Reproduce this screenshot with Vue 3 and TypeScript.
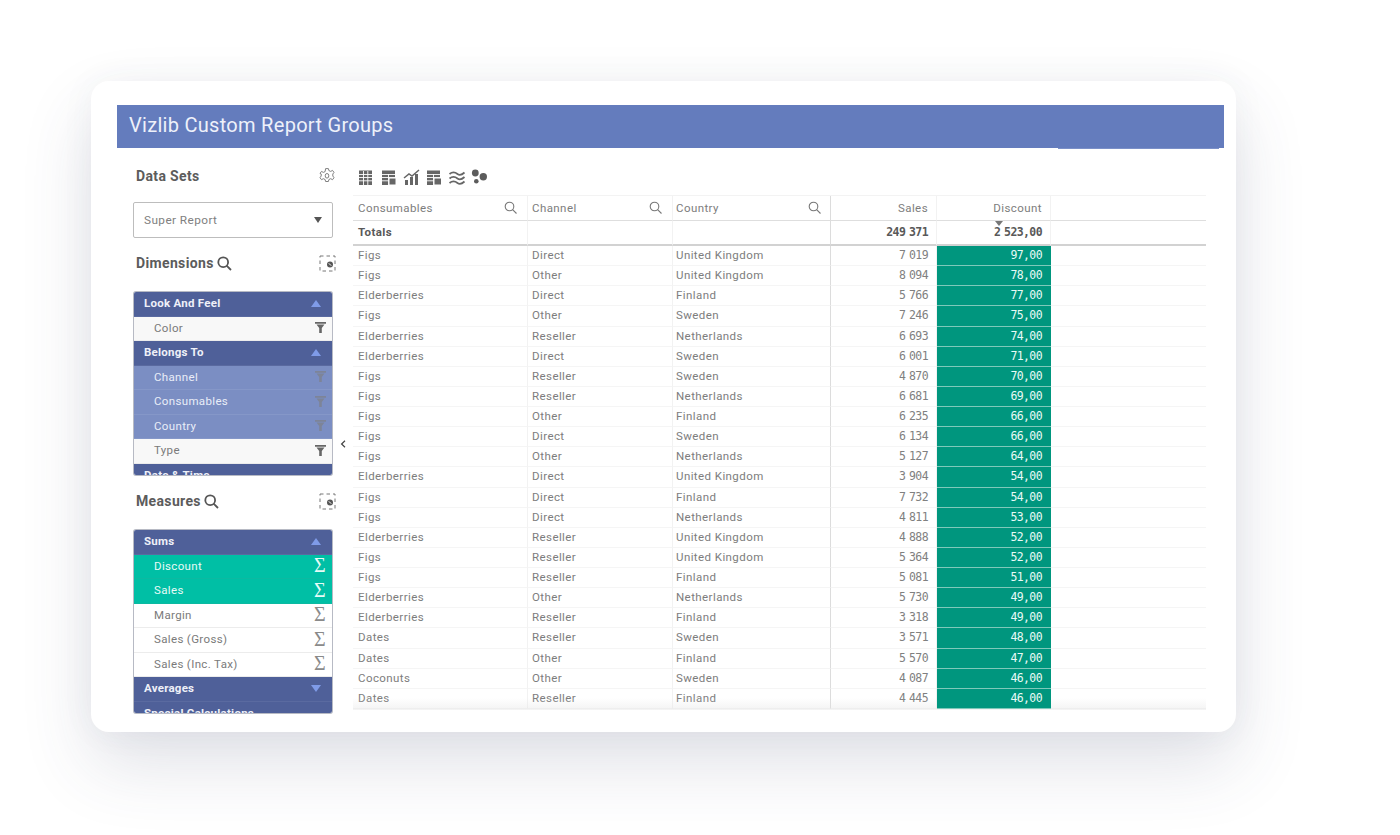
<script setup lang="ts">
interface Row { a: string; b: string; c: string; s: string; d: string }
const raw: string[] = [
  'Figs|Direct|United Kingdom|7 019|97,00',
  'Figs|Other|United Kingdom|8 094|78,00',
  'Elderberries|Direct|Finland|5 766|77,00',
  'Figs|Other|Sweden|7 246|75,00',
  'Elderberries|Reseller|Netherlands|6 693|74,00',
  'Elderberries|Direct|Sweden|6 001|71,00',
  'Figs|Reseller|Sweden|4 870|70,00',
  'Figs|Reseller|Netherlands|6 681|69,00',
  'Figs|Other|Finland|6 235|66,00',
  'Figs|Direct|Sweden|6 134|66,00',
  'Figs|Other|Netherlands|5 127|64,00',
  'Elderberries|Direct|United Kingdom|3 904|54,00',
  'Figs|Direct|Finland|7 732|54,00',
  'Figs|Direct|Netherlands|4 811|53,00',
  'Elderberries|Reseller|United Kingdom|4 888|52,00',
  'Figs|Reseller|United Kingdom|5 364|52,00',
  'Figs|Reseller|Finland|5 081|51,00',
  'Elderberries|Other|Netherlands|5 730|49,00',
  'Elderberries|Reseller|Finland|3 318|49,00',
  'Dates|Reseller|Sweden|3 571|48,00',
  'Dates|Other|Finland|5 570|47,00',
  'Coconuts|Other|Sweden|4 087|46,00',
  'Dates|Reseller|Finland|4 445|46,00',
]
const rows: Row[] = raw.map((l) => {
  const [a, b, c, s, d] = l.split('|')
  return { a, b, c, s, d }
})
const dims = [
  { t: 'Look And Feel', h: true, up: true },
  { t: 'Color' },
  { t: 'Belongs To', h: true, up: true },
  { t: 'Channel', sel: true },
  { t: 'Consumables', sel: true },
  { t: 'Country', sel: true },
  { t: 'Type' },
  { t: 'Date & Time', h: true, up: true },
]
const meas = [
  { t: 'Sums', h: true, up: true },
  { t: 'Discount', on: true },
  { t: 'Sales', on: true },
  { t: 'Margin' },
  { t: 'Sales (Gross)' },
  { t: 'Sales (Inc. Tax)' },
  { t: 'Averages', h: true, up: false },
  { t: 'Special Calculations', h: true, up: false },
]
</script>

<template>
  <div class="page">
    <div class="card">
      <div class="title">Vizlib Custom Report Groups<span class="title-strip"></span></div>
      <div class="body">
        <aside class="left">
          <div class="sec sec-data">
            <span>Data Sets</span>
            <svg class="gear" width="18" height="18" viewBox="0 0 18 18" fill="none" stroke="#808080" stroke-width="1">
              <path d="M7.600 1.600h2.800l.5 2 1.800.8 1.800-1 1.500 2-1.200 1.600v2l1.200 1.700-1.500 2-1.800-1-1.800.8-.5 2H7.600l-.5-2-1.800-.8-1.800 1-1.500-2 1.200-1.700v-2L2 6.400l1.500-2 1.800 1 1.800-.8z"/>
              <ellipse cx="9" cy="8.800" rx="1.800" ry="2.300"/>
            </svg>
          </div>
          <div class="select"><span>Super Report</span><i class="tri-down"></i></div>
          <div class="sec sec-dim">
            <span class="sec-name">Dimensions
              <svg width="15" height="15" viewBox="0 0 15 15" fill="none" stroke="#555" stroke-width="1.800"><circle cx="6.200" cy="6.200" r="4.900"/><path d="M9.600 9.600L14 14"/></svg>
            </span>
            <svg class="dash" width="17" height="17" viewBox="0 0 17 17" fill="none"><rect x="1" y="1" width="15" height="15" stroke="#777" stroke-dasharray="3.500 3"/><circle cx="11" cy="9.500" r="3" fill="#555"/><path d="M9.800 8.300l2.400 2.400" stroke="#fff"/></svg>
          </div>
          <div class="list list-dim">
            <div v-for="d in dims" :key="d.t" class="item" :class="{ head: d.h, sel: d.sel }">
              <span>{{ d.t }}</span>
              <i v-if="d.h" :class="d.up ? 'tri-up' : 'tri-dn'"></i>
              <svg v-else class="funnel" width="11" height="11" viewBox="0 0 11 11"><path d="M0 0h11v1.800H0zM1.500 2.600h8L6.800 6v5H4.200V6z" /></svg>
            </div>
          </div>
          <div class="sec sec-mea">
            <span class="sec-name">Measures
              <svg width="15" height="15" viewBox="0 0 15 15" fill="none" stroke="#555" stroke-width="1.800"><circle cx="6.200" cy="6.200" r="4.900"/><path d="M9.600 9.600L14 14"/></svg>
            </span>
            <svg class="dash" width="17" height="17" viewBox="0 0 17 17" fill="none"><rect x="1" y="1" width="15" height="15" stroke="#777" stroke-dasharray="3.500 3"/><circle cx="11" cy="9.500" r="3" fill="#555"/><path d="M9.800 8.300l2.400 2.400" stroke="#fff"/></svg>
          </div>
          <div class="list list-mea">
            <div v-for="m in meas" :key="m.t" class="item" :class="{ head: m.h, on: m.on }">
              <span>{{ m.t }}</span>
              <i v-if="m.h" :class="m.up ? 'tri-up' : 'tri-dn'"></i>
              <b v-else class="sigma">Σ</b>
            </div>
          </div>
        </aside>
        <div class="mid"><svg width="6" height="8" viewBox="0 0 6 8" fill="none" stroke="#444" stroke-width="1.200"><path d="M5 .8L1.600 4 5 7.200"/></svg></div>
        <main class="right">
          <div class="tools">
            <svg width="131" height="22" viewBox="0 0 131 22" fill="#666">
              <g><rect x="1" y="3.500" width="13" height="14.500"/><path d="M1 7.500h13M1 10.500h13M1 13.800h13M5.500 4v14M9.800 4v14" stroke="#fff" stroke-width=".9"/></g>
              <g transform="translate(24 0)"><rect x="0" y="3.500" width="13" height="14.500"/><path d="M0 7.500h13M0 10.500h13M0 13.800h7M6.500 7v11" stroke="#fff" stroke-width=".9"/><rect x="7" y="11" width="7" height="7" stroke="#fff" stroke-width="1"/></g>
              <g transform="translate(46 0)"><path d="M1 18v-5h3v5zM6 18v-8h3v8zM11 18V7h3v11z"/><path d="M0 11l5-4 3 2 7-6" fill="none" stroke="#666" stroke-width="1.500"/></g>
              <g transform="translate(69 0)"><rect x="0" y="3.500" width="13" height="14.500"/><path d="M0 7.500h13M0 10.500h13M0 13.800h7M6.500 7v11" stroke="#fff" stroke-width=".9"/><rect x="7" y="11" width="7.500" height="7" stroke="#fff" stroke-width="1"/></g>
              <g transform="translate(91 0)" fill="none" stroke="#666" stroke-width="1.700"><path d="M.5 7c3-2.500 5-2.500 8 0 2 1.500 4 1.200 7-1.500M.5 11.500c3-2.500 5-2.500 8 0 2 1.500 4 1.200 7-1.500M.5 16c3-2.500 5-2.500 8 0 2 1.500 4 1.200 7-1.500"/></g>
              <g transform="translate(114 0)" fill="#5c5c5c"><circle cx="3.300" cy="6" r="3.400"/><circle cx="11.300" cy="9.700" r="3.700"/><circle cx="4.300" cy="14.300" r="2.300"/></g>
            </svg>
          </div>
          <div class="table">
            <div class="tr th">
              <div class="td">Consumables<svg class="mag" width="13" height="13" viewBox="0 0 13 13" fill="none" stroke="#777" stroke-width="1.100"><circle cx="5.500" cy="5.500" r="4.300"/><path d="M8.600 8.600L12.500 12.500"/></svg></div>
              <div class="td">Channel<svg class="mag" width="13" height="13" viewBox="0 0 13 13" fill="none" stroke="#777" stroke-width="1.100"><circle cx="5.500" cy="5.500" r="4.300"/><path d="M8.600 8.600L12.500 12.500"/></svg></div>
              <div class="td">Country<svg class="mag" width="13" height="13" viewBox="0 0 13 13" fill="none" stroke="#777" stroke-width="1.100"><circle cx="5.500" cy="5.500" r="4.300"/><path d="M8.600 8.600L12.500 12.500"/></svg></div>
              <div class="td num-h">Sales</div>
              <div class="td num-h">Discount</div>
              <div class="td end"></div>
            </div>
            <div class="tr tot">
              <div class="td">Totals</div>
              <div class="td"></div>
              <div class="td"></div>
              <div class="td num">249 371</div>
              <div class="td num sorted"><i class="sort"></i>2 523,00</div>
              <div class="td end"></div>
            </div>
            <div v-for="(r, i) in rows" :key="i" class="tr row">
              <div class="td">{{ r.a }}</div>
              <div class="td">{{ r.b }}</div>
              <div class="td">{{ r.c }}</div>
              <div class="td num">{{ r.s }}</div>
              <div class="td num green">{{ r.d }}</div>
              <div class="td end"></div>
            </div>
            <div class="fade"></div>
          </div>
        </main>
      </div>
    </div>
  </div>
</template>

<style>
html, body { margin: 0; background: #fff; }
</style>

<style scoped>
.page {
  width: 1400px;
  height: 835px;
  box-sizing: border-box;
  padding: 81px 0 0 91px;
  overflow: hidden;
  background: #fff;
  font-family: Roboto, sans-serif;
  color: #666;
}
.card {
  width: 1145px;
  height: 651px;
  box-sizing: border-box;
  padding: 24px 12px 0 26px;
  background: #fff;
  border-radius: 18px;
  box-shadow: 0 32px 70px rgba(60, 70, 105, 0.16), 0 0 34px rgba(60, 70, 105, 0.05);
}
.title {
  position: relative;
  height: 43px;
  line-height: 40px;
  padding-left: 12px;
  background: #647cbd;
  color: #eef1fa;
  font-size: 20px;
  letter-spacing: .29px;
}
.title-strip {
  position: absolute;
  left: 941px;
  right: 5px;
  bottom: -1px;
  height: 1px;
  background: #7b90c8;
}
.body {
  display: flex;
  padding-left: 16px;
}
.left { width: 200px; flex: none; }
.mid {
  width: 20px;
  flex: none;
  padding-top: 285px;
  box-sizing: border-box;
  text-align: center;
}
.right { width: 853px; flex: none; }

.sec {
  display: flex;
  align-items: center;
  justify-content: space-between;
  padding: 0 0 0 3px;
  margin-right: -3px;
  font-weight: 700;
  font-size: 14px;
  color: #5c5c5c;
  letter-spacing: .35px;
}
.sec-name { display: inline-flex; align-items: center; gap: 3px; }
.sec-data { height: 20px; margin-top: 18px; }
.sec-dim { height: 20px; margin-top: 15px; }
.sec-mea { height: 20px; margin-top: 16px; }
.select {
  margin-top: 16px;
  height: 36px;
  box-sizing: border-box;
  display: flex;
  align-items: center;
  justify-content: space-between;
  padding: 0 10px 1px;
  border: 1px solid #bdbdbd;
  border-radius: 2px;
  font-size: 11.800px;
  letter-spacing: .42px;
  color: #808080;
}
.tri-down {
  width: 0; height: 0;
  border-left: 4.500px solid transparent;
  border-right: 4.500px solid transparent;
  border-top: 6px solid #555;
}
.list {
  margin: 0 1px;
  border-radius: 2px;
  overflow: hidden;
  background: #fff;
  box-shadow: 0 0 0 1px #b7bac4;
}
.list-dim { height: 183px; margin-top: 19px; }
.list-mea { height: 183px; margin-top: 19px; }
.item {
  height: 24.500px;
  box-sizing: border-box;
  display: flex;
  align-items: center;
  justify-content: space-between;
  padding: 0 6px 1px 20px;
  font-size: 11.500px;
  letter-spacing: .35px;
  color: #7a7a7a;
  background: #fff;
  border-bottom: 1px solid #ececec;
}
.item:last-child i { visibility: hidden; }
.list-dim .item:not(.head):not(.sel) { background: #f8f8f8; }
.item.head {
  padding: 0 11px 1px 10px;
  background: #4f6099;
  color: #eef0f8;
  font-weight: 700;
  font-size: 11.500px;
  letter-spacing: .25px;
  border-bottom: 1px solid #5a6aa0;
}
.item.sel {
  background: #7b8ec3;
  color: #e9edf8;
  border-bottom: 1px solid #8597c8;
}
.item.on {
  background: #00bfa5;
  color: #e6fbf7;
  border-bottom: 1px solid #0cb9a1;
}
.funnel { fill: #666; }
.item.sel .funnel { fill: #7d8498; }
.tri-up, .tri-dn {
  width: 0; height: 0;
  border-left: 5px solid transparent;
  border-right: 5px solid transparent;
}
.tri-up { border-bottom: 7px solid #7f9be8; }
.tri-dn { border-top: 7px solid #7f9be8; }
.sigma {
  font-family: "Liberation Serif", serif;
  font-weight: 400;
  font-size: 20px;
  line-height: 19px;
  color: #8a8a8a;
}
.item.on .sigma { color: #e6fbf7; }

.tools {
  height: 47px;
  box-sizing: border-box;
  padding: 19px 0 0 0;
}
.tools svg { display: block; margin-left: 5px; height: 22px; }
.table { position: relative; height: 514px; overflow: hidden; border-top: 1px solid #f3f3f3; }
.tr {
  display: grid;
  grid-template-columns: 175px 145px 158px 106px 114px 1fr;
  font-size: 11.500px;
  letter-spacing: .42px;
  color: #7d7d7d;
}
.td {
  display: flex;
  align-items: center;
  box-sizing: border-box;
  padding: 0 4px 1px 5px;
  border-right: 1px solid #f2f2f2;
  border-bottom: 1px solid #f5f5f5;
  white-space: nowrap;
}
.tr .td:nth-child(2) { padding-left: 4px; }
.tr .td:nth-child(3) { padding-left: 3px; border-right-color: #dcdcdc; }
.td.end { border-right: 0; }
.th { height: 25px; }
.th .td { border-bottom-color: #dedede; justify-content: space-between; padding-right: 10px; }
.th .td:nth-child(3) { padding-right: 9px; }
.th .td.num-h { justify-content: flex-end; padding-right: 8px; }
.tot { height: 25px; }
.tot .td { border-bottom: 2px solid #d2d2d2; font-weight: 700; color: #595959; }
.row { height: 20.140px; }
.td.num {
  justify-content: flex-end;
  padding-right: 8px;
  font-family: "DejaVu Sans Mono", monospace;
  font-size: 11.500px;
  letter-spacing: -.6px;
  word-spacing: -2.500px;
  color: #808080;
}
.tot .td.num { font-weight: 700; color: #595959; }
.td.green {
  position: relative;
  z-index: 1;
  padding-right: 9px;
  background: #00967e;
  color: #e8faf6;
  border-right: 0;
  border-bottom: 1px solid #7ec9ba;
}
.sorted { position: relative; }
.sort {
  position: absolute;
  left: 58px;
  top: 0;
  width: 0; height: 0;
  border-left: 4px solid transparent;
  border-right: 4px solid transparent;
  border-top: 5px solid #777;
}
.fade {
  position: absolute;
  left: 0; right: 0; bottom: 0;
  height: 12px;
  background: linear-gradient(to bottom, rgba(225,225,225,0), rgba(225,225,225,.4));
  pointer-events: none;
}
</style>
